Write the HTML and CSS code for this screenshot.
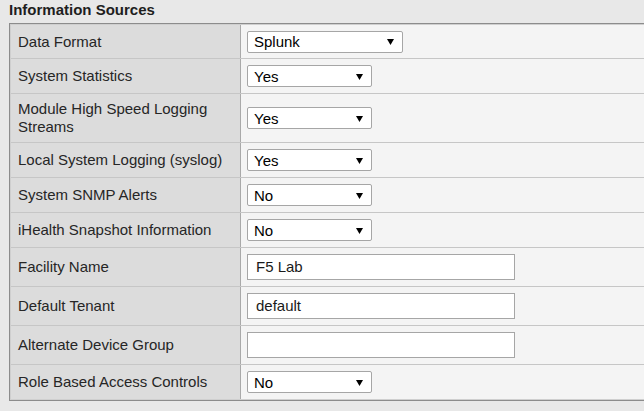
FILE: index.html
```html
<!DOCTYPE html>
<html>
<head>
<meta charset="utf-8">
<link rel="stylesheet" href="styles.css">
</head>
<body>
<div class="title">Information Sources</div>
<div class="panel">
  <div class="inner">
    <div class="row r-first">
      <div class="label">Data Format</div>
      <div class="value"><div class="select wide"><span>Splunk</span><svg class="arrow" width="7" height="6" viewBox="0 0 7 6"><path d="M0 0H7L3.5 6Z"/></svg></div></div>
    </div>
    <div class="row r-sel">
      <div class="label">System Statistics</div>
      <div class="value"><div class="select"><span>Yes</span><svg class="arrow" width="7" height="6" viewBox="0 0 7 6"><path d="M0 0H7L3.5 6Z"/></svg></div></div>
    </div>
    <div class="row r-tall">
      <div class="label">Module High Speed Logging Streams</div>
      <div class="value"><div class="select"><span>Yes</span><svg class="arrow" width="7" height="6" viewBox="0 0 7 6"><path d="M0 0H7L3.5 6Z"/></svg></div></div>
    </div>
    <div class="row r-sel">
      <div class="label">Local System Logging (syslog)</div>
      <div class="value"><div class="select"><span>Yes</span><svg class="arrow" width="7" height="6" viewBox="0 0 7 6"><path d="M0 0H7L3.5 6Z"/></svg></div></div>
    </div>
    <div class="row r-sel">
      <div class="label">System SNMP Alerts</div>
      <div class="value"><div class="select"><span>No</span><svg class="arrow" width="7" height="6" viewBox="0 0 7 6"><path d="M0 0H7L3.5 6Z"/></svg></div></div>
    </div>
    <div class="row r-sel">
      <div class="label">iHealth Snapshot Information</div>
      <div class="value"><div class="select"><span>No</span><svg class="arrow" width="7" height="6" viewBox="0 0 7 6"><path d="M0 0H7L3.5 6Z"/></svg></div></div>
    </div>
    <div class="row r-inp">
      <div class="label">Facility Name</div>
      <div class="value"><div class="input">F5 Lab</div></div>
    </div>
    <div class="row r-inp">
      <div class="label">Default Tenant</div>
      <div class="value"><div class="input">default</div></div>
    </div>
    <div class="row r-inp">
      <div class="label">Alternate Device Group</div>
      <div class="value"><div class="input"></div></div>
    </div>
    <div class="row r-last">
      <div class="label">Role Based Access Controls</div>
      <div class="value"><div class="select"><span>No</span><svg class="arrow" width="7" height="6" viewBox="0 0 7 6"><path d="M0 0H7L3.5 6Z"/></svg></div></div>
    </div>
  </div>
</div>
</body>
</html>
```
FILE: styles.css
```css
html, body {
  margin: 0;
  padding: 0;
  background: #e8e8e8;
  font-family: "Liberation Sans", Arial, sans-serif;
  font-size: 15px;
  color: #222;
}
.title {
  height: 23px;
  box-sizing: border-box;
  padding: 1px 0 0 9px;
  font-weight: bold;
  line-height: 17px;
  color: #1e1e1e;
}
.panel {
  margin-left: 9px;
  border: 1px solid #8c8c8c;
  border-right: none;
}
.inner {
  border: 1px solid #cfcfcf;
  border-right: none;
}
.row {
  display: flex;
  border-bottom: 1px solid #c6c6c6;
}
.row.r-last {
  border-bottom: none;
}
.r-first .label, .r-first .value { height: 33px; }
.r-sel .label, .r-sel .value { height: 34px; }
.r-tall .label, .r-tall .value { height: 48px; }
.r-inp .label, .r-inp .value { height: 38px; }
.r-last .label, .r-last .value { height: 34px; }
.label {
  width: 230px;
  flex: none;
  box-sizing: border-box;
  padding: 0 10px 0 7px;
  background: #dcdcdc;
  border-right: 1px solid #a9a9a9;
  display: flex;
  align-items: center;
  line-height: 18px;
  color: #262626;
}
.value {
  flex: 1;
  background: #f4f4f4;
  display: flex;
  align-items: center;
  padding-left: 6px;
}
.select {
  width: 125px;
  height: 22px;
  box-sizing: border-box;
  border: 1px solid #a6a6a6;
  border-radius: 2px;
  background: #fff;
  display: flex;
  align-items: center;
  justify-content: space-between;
  padding: 0 8px 0 6px;
  color: #000;
}
.select.wide {
  width: 156px;
}
.arrow {
  display: block;
  fill: #000;
  margin-top: 1px;
}
.input {
  width: 268px;
  height: 26px;
  box-sizing: border-box;
  border: 1px solid #a6a6a6;
  background: #fff;
  padding: 0 8px;
  line-height: 24px;
  color: #1a1a1a;
}
```
